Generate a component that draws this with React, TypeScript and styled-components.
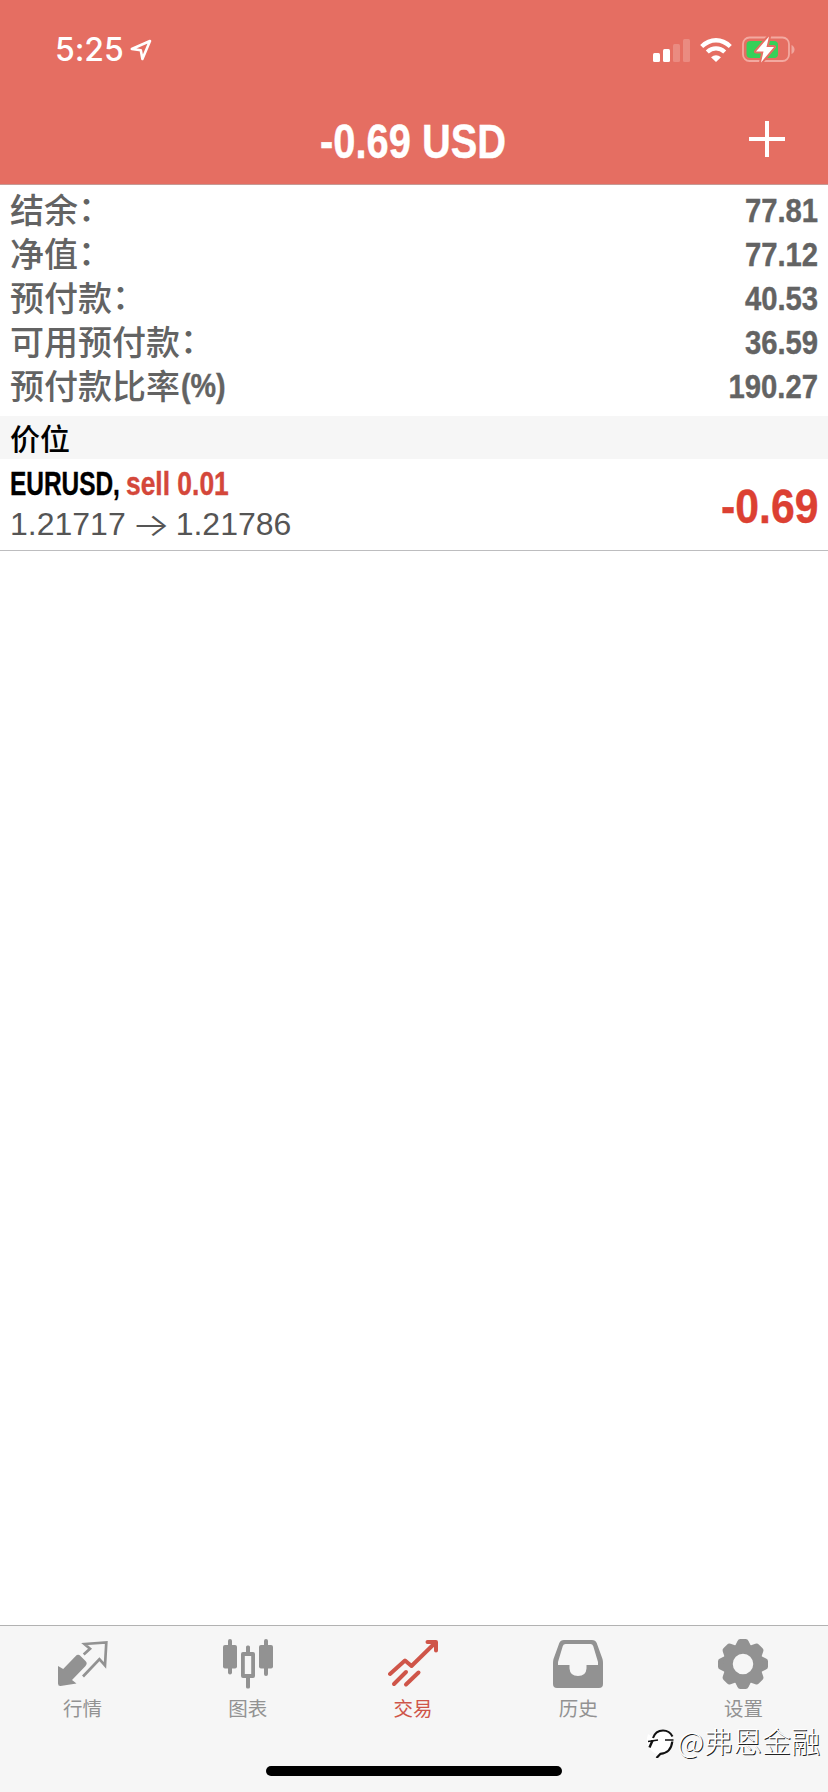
import React from 'react';
import styled, { createGlobalStyle } from 'styled-components';

const SANS = '"Liberation Sans", "Noto Sans CJK SC", sans-serif';
const CJK = '"Noto Sans CJK SC", sans-serif';

const GlobalStyle = createGlobalStyle`
  * { box-sizing: border-box; }
  body { margin: 0; background: #fff; font-family: ${SANS}; }
`;

const Screen = styled.div`
  position: relative;
  display: flex;
  flex-direction: column;
  width: 828px;
  height: 1792px;
  overflow: hidden;
  background: #fff;
`;

const Header = styled.header`
  height: 185px;
  background: #e56e62;
  border-bottom: 1px solid #c69a95;
  color: #fff;
`;

const StatusBar = styled.div`
  display: flex;
  align-items: center;
  justify-content: space-between;
  height: 100px;
  padding: 0 33px 0 55px;
`;

const StatusGroup = styled.div<{ $gap: number }>`
  display: flex;
  align-items: center;
  gap: ${(p) => p.$gap}px;
`;

const Clock = styled.span`
  font: 500 32px/40px Inter, sans-serif;
  letter-spacing: -0.1px;
`;

const TitleBar = styled.div`
  display: grid;
  grid-template-columns: 1fr auto 1fr;
  align-items: center;
  height: 84px;
  padding-right: 43px;
  padding-left: 41px;
`;

const PlusButton = styled.button`
  grid-column: 3;
  justify-self: end;
  display: flex;
  margin: -6px 0 0;
  padding: 0;
  border: 0;
  background: none;
`;

const Condensed = styled.span<{ $size: number; $stretch: number; $origin?: string; $color?: string }>`
  display: inline-block;
  font-family: "Liberation Sans", sans-serif;
  font-weight: 700;
  font-size: ${(p) => p.$size}px;
  line-height: 1.15;
  white-space: nowrap;
  color: ${(p) => p.$color ?? 'inherit'};
  -webkit-text-stroke: 0.4px currentColor;
  transform: scaleX(${(p) => p.$stretch});
  transform-origin: ${(p) => p.$origin ?? 'left'} center;
`;

const Title = styled(Condensed)`
  grid-column: 2;
`;

const Summary = styled.section`
  height: 231px;
  padding: 3px 10px 0 10px;
  color: #636363;
`;

const SummaryRow = styled.div`
  display: flex;
  align-items: center;
  justify-content: space-between;
  height: 44px;
`;

const SummaryLabel = styled.span`
  display: flex;
  align-items: center;
  margin-top: -2px;
  font: 500 34px/44px ${CJK};
  white-space: nowrap;
`;

const Colon = styled.span`
  height: 44px;
  margin-top: -5px;
`;

const Suffix = styled(Condensed)`
  margin-left: 1px;
  margin-top: 2px;
`;

const Value = styled(Condensed)`
  margin-top: 2px;
`;

const SectionTitle = styled.h2`
  margin: 0;
  height: 43px;
  padding-left: 10px;
  background: #f6f6f6;
  color: #000;
  font: 500 30px/42px ${CJK};
`;

const Position = styled.div`
  display: flex;
  align-items: center;
  justify-content: space-between;
  height: 92px;
  padding: 0 10px 1px 10px;
  border-bottom: 1px solid #bdbdbf;
`;

const PositionInfo = styled.div`
  display: flex;
  flex-direction: column;
  align-items: flex-start;
  gap: 4px;
`;

const Deal = styled.div`
  display: grid;
  grid-template-columns: 116px auto;
`;

const Prices = styled.span`
  display: flex;
  align-items: center;
  font-size: 32px;
  line-height: 37px;
  color: #555;
`;

const Arrow = styled.span`
  width: 50px;
  font-family: Inter, sans-serif;
  font-weight: 300;
  text-align: center;
  transform: scaleX(1.27);
`;

const Profit = styled(Condensed)`
  margin-top: 5px;
`;

const TabBar = styled.nav`
  display: grid;
  grid-template-columns: repeat(5, 1fr);
  height: 167px;
  margin-top: auto;
  padding: 13px 2px 0 0;
  background: #f6f6f6;
  border-top: 1px solid #b2b2b2;
`;

const Tab = styled.a<{ $active?: boolean }>`
  display: flex;
  flex-direction: column;
  align-items: center;
  gap: 4px;
  color: ${(p) => (p.$active ? '#cf5549' : '#929292')};
`;

const TabLabel = styled.span`
  font: 400 19.5px/30px ${CJK};
`;

const HomeIndicator = styled.div`
  position: absolute;
  left: 266px;
  bottom: 16px;
  width: 296px;
  height: 10px;
  border-radius: 5px;
  background: #000;
`;

const Watermark = styled.div`
  position: absolute;
  right: 8px;
  bottom: 30px;
  display: flex;
  align-items: center;
  gap: 4px;
  height: 44px;
  color: #fff;
  font: 300 29px/44px ${CJK};
  text-shadow: 1px 1px 0.5px #222;
  white-space: nowrap;
`;

const LocationIcon = () => (
  <svg width="22" height="22" viewBox="0 0 22 22" fill="none" stroke="#fff" strokeWidth="2.6" strokeLinejoin="round">
    <path d="M1.8 10 20 2 12.4 20 10.8 11.2Z" />
  </svg>
);

const SignalIcon = () => (
  <svg width="38" height="24" viewBox="0 0 38 24" fill="#fff">
    <rect x="0" y="15" width="7" height="9" rx="1.5" />
    <rect x="10" y="11" width="7" height="13" rx="1.5" />
    <rect x="20" y="6" width="7" height="18" rx="1.5" opacity="0.2" />
    <rect x="30" y="1" width="7" height="23" rx="1.5" opacity="0.2" />
  </svg>
);

const WifiIcon = () => (
  <svg width="32" height="24" viewBox="0 0 32 24" fill="none" stroke="#fff" strokeWidth="4.4">
    <path d="M1.7 8.5Q8.2 2.3 16 2.3T30.3 8.5" />
    <path d="M7.3 14Q11.2 10.4 16 10.4T24.7 14" />
    <path d="M11 19.2Q16 15.4 21 19.2L16 24Z" fill="#fff" stroke="none" />
  </svg>
);

const BatteryIcon = () => (
  <svg width="54" height="28" viewBox="-1 0 54 28">
    <rect x="1" y="1.5" width="46" height="23.5" rx="6.5" fill="none" stroke="#f3a9a0" strokeWidth="1.8" />
    <path d="M49.5 9Q52.5 10.5 52.5 13.5T49.5 18Z" fill="#f0a59d" />
    <rect x="4.500" y="5" width="31.500" height="17" rx="4" fill="#35d158" />
    <path d="M27 .5 14 15.500H21.500L19 26.500 32 11H24.500Z" fill="#fff" stroke="#e56e62" strokeWidth="4" paintOrder="stroke" strokeLinejoin="round" />
  </svg>
);

const PlusIcon = () => (
  <svg width="36" height="36" viewBox="0 0 36 36" fill="#fff">
    <path d="M16 0h4v16h16v4H20v16h-4V20H0v-4h16Z" />
  </svg>
);

const QuotesIcon = () => (
  <svg width="50" height="50" viewBox="1 0 50 50">
    <path d="M0 17.5 5.2 20.5 17.5 7.8Q20 5 22.5 7.5L27.5 12.5Q30 15 27.3 17.7L14 31.5 18.500 35 2.5 37.5Q0 37.6 0 35Z" transform="translate(1 9.5)" fill="currentColor" />
    <path d="M26.700 15 33 9.3 27.500 4.500 49.300 3 48 26 42.400 19.700 26 37" transform="translate(0 .5)" fill="none" stroke="currentColor" strokeWidth="2.7" />
  </svg>
);

const ChartIcon = () => (
  <svg width="50" height="50" viewBox="0 0 50 50" fill="currentColor">
    <rect x="5" y="0" width="4" height="35.5" rx="2" />
    <rect x="0" y="6" width="14" height="23.5" rx="2" />
    <rect x="41" y="0" width="4" height="37" rx="2" />
    <rect x="36" y="6" width="14" height="23.5" rx="2" />
    <rect x="23" y="6.5" width="4" height="10" rx="1.5" />
    <rect x="23" y="37" width="4" height="12.5" rx="1.5" />
    <path fillRule="evenodd" d="M20 13h10a2 2 0 0 1 2 2v22a2 2 0 0 1-2 2H20a2 2 0 0 1-2-2V15a2 2 0 0 1 2-2ZM21.8 17v18h6.4V17Z" />
  </svg>
);

const TradeIcon = () => (
  <svg width="50" height="50" viewBox="0 0 50 50" fill="none" stroke="currentColor" strokeWidth="4" strokeLinecap="round" strokeLinejoin="round">
    <path d="M2 35 17 21.5 23.5 27 47 4" />
    <path d="M39.5 3H48V11.5" />
    <path d="M18 33 6 45M30.500 33.500 18 45.5" />
  </svg>
);

const HistoryIcon = () => (
  <svg width="50" height="50" viewBox="0 0 50 50" fill="currentColor" fillRule="evenodd">
    <path d="M11 1H39Q42.5 1 43.7 4L49.5 20Q50 22 50 24V45Q50 49 46 49H4Q0 49 0 45V24Q0 22 .5 20L6.300 4Q7.500 1 11 1ZM12.500 5Q10.500 5 9.800 7L5 23V26H16.500V29.500Q17 37 25 37T33.500 29.500V26H45V23L40.200 7Q39.500 5 37.500 5Z" />
  </svg>
);

const SettingsIcon = () => (
  <svg width="50" height="50" viewBox="-25 -25 50 50">
    <g fill="currentColor">
      {[0, 45, 90, 135, 180, 225, 270, 315].map((angle) => (
        <path key={angle} transform={`rotate(${angle})`} d="M-8.500 -17 -5.500 -23Q-4.700 -25 -2.700 -25H2.700Q4.700 -25 5.500 -23L8.500 -17V-12H-8.500Z" />
      ))}
    </g>
    <circle r="15" fill="none" stroke="currentColor" strokeWidth="9.500" />
  </svg>
);

const WatermarkLogo = () => (
  <svg width="28" height="36" viewBox="0 0 28 36" fill="none">
    <path d="M2 12Q-1 22 4 27 8 32 12 32L14 31Q25 29 26 18V14Q23 8 16 8 8 8 7 15" fill="#fff" />
    <g stroke="#111">
      <path d="M7 16Q9.500 8.500 17 8.500 23.500 8.500 26.500 14.500" strokeWidth="2" />
      <path d="M2 19.500 12 18M19 18H27.500" strokeWidth="1.600" />
      <path d="M26.300 19.500Q25 31 14.500 31.800L10.500 36" strokeWidth="2.200" />
      <path d="M3.500 25.500 6.500 18.500" strokeWidth="2.400" />
    </g>
  </svg>
);

const summary = [
  { label: '结余', value: '77.81' },
  { label: '净值', value: '77.12' },
  { label: '预付款', value: '40.53' },
  { label: '可用预付款', value: '36.59' },
  { label: '预付款比率', suffix: '(%)', value: '190.27' },
];

const tabs = [
  { label: '行情', Icon: QuotesIcon },
  { label: '图表', Icon: ChartIcon },
  { label: '交易', Icon: TradeIcon, active: true },
  { label: '历史', Icon: HistoryIcon },
  { label: '设置', Icon: SettingsIcon },
];

export default function App() {
  return (
    <Screen>
      <GlobalStyle />
      <Header>
        <StatusBar>
          <StatusGroup $gap={6}>
            <Clock>5:25</Clock>
            <LocationIcon />
          </StatusGroup>
          <StatusGroup $gap={9}>
            <SignalIcon />
            <WifiIcon />
            <BatteryIcon />
          </StatusGroup>
        </StatusBar>
        <TitleBar>
          <Title $size={48} $stretch={0.83} $origin="center">-0.69 USD</Title>
          <PlusButton aria-label="+">
            <PlusIcon />
          </PlusButton>
        </TitleBar>
      </Header>
      <Summary>
        {summary.map(({ label, suffix, value }) => (
          <SummaryRow key={label}>
            <SummaryLabel>
              {label}
              {suffix ? <Suffix $size={33} $stretch={0.87}>{suffix}</Suffix> : <Colon>：</Colon>}
            </SummaryLabel>
            <Value $size={34} $stretch={0.86} $origin="right">{value}</Value>
          </SummaryRow>
        ))}
      </Summary>
      <SectionTitle>价位</SectionTitle>
      <Position>
        <PositionInfo>
          <Deal>
            <Condensed $size={33} $stretch={0.74} $color="#000">EURUSD,</Condensed>
            <Condensed $size={33} $stretch={0.8} $color="#d4473a">sell 0.01</Condensed>
          </Deal>
          <Prices>
            1.21717<Arrow>→</Arrow>1.21786
          </Prices>
        </PositionInfo>
        <Profit $size={48} $stretch={0.89} $origin="right" $color="#dc4032">-0.69</Profit>
      </Position>
      <TabBar>
        {tabs.map(({ label, Icon, active }) => (
          <Tab key={label} $active={active}>
            <Icon />
            <TabLabel>{label}</TabLabel>
          </Tab>
        ))}
      </TabBar>
      <HomeIndicator />
      <Watermark>
        <WatermarkLogo />
        <span>@弗恩金融</span>
      </Watermark>
    </Screen>
  );
}
